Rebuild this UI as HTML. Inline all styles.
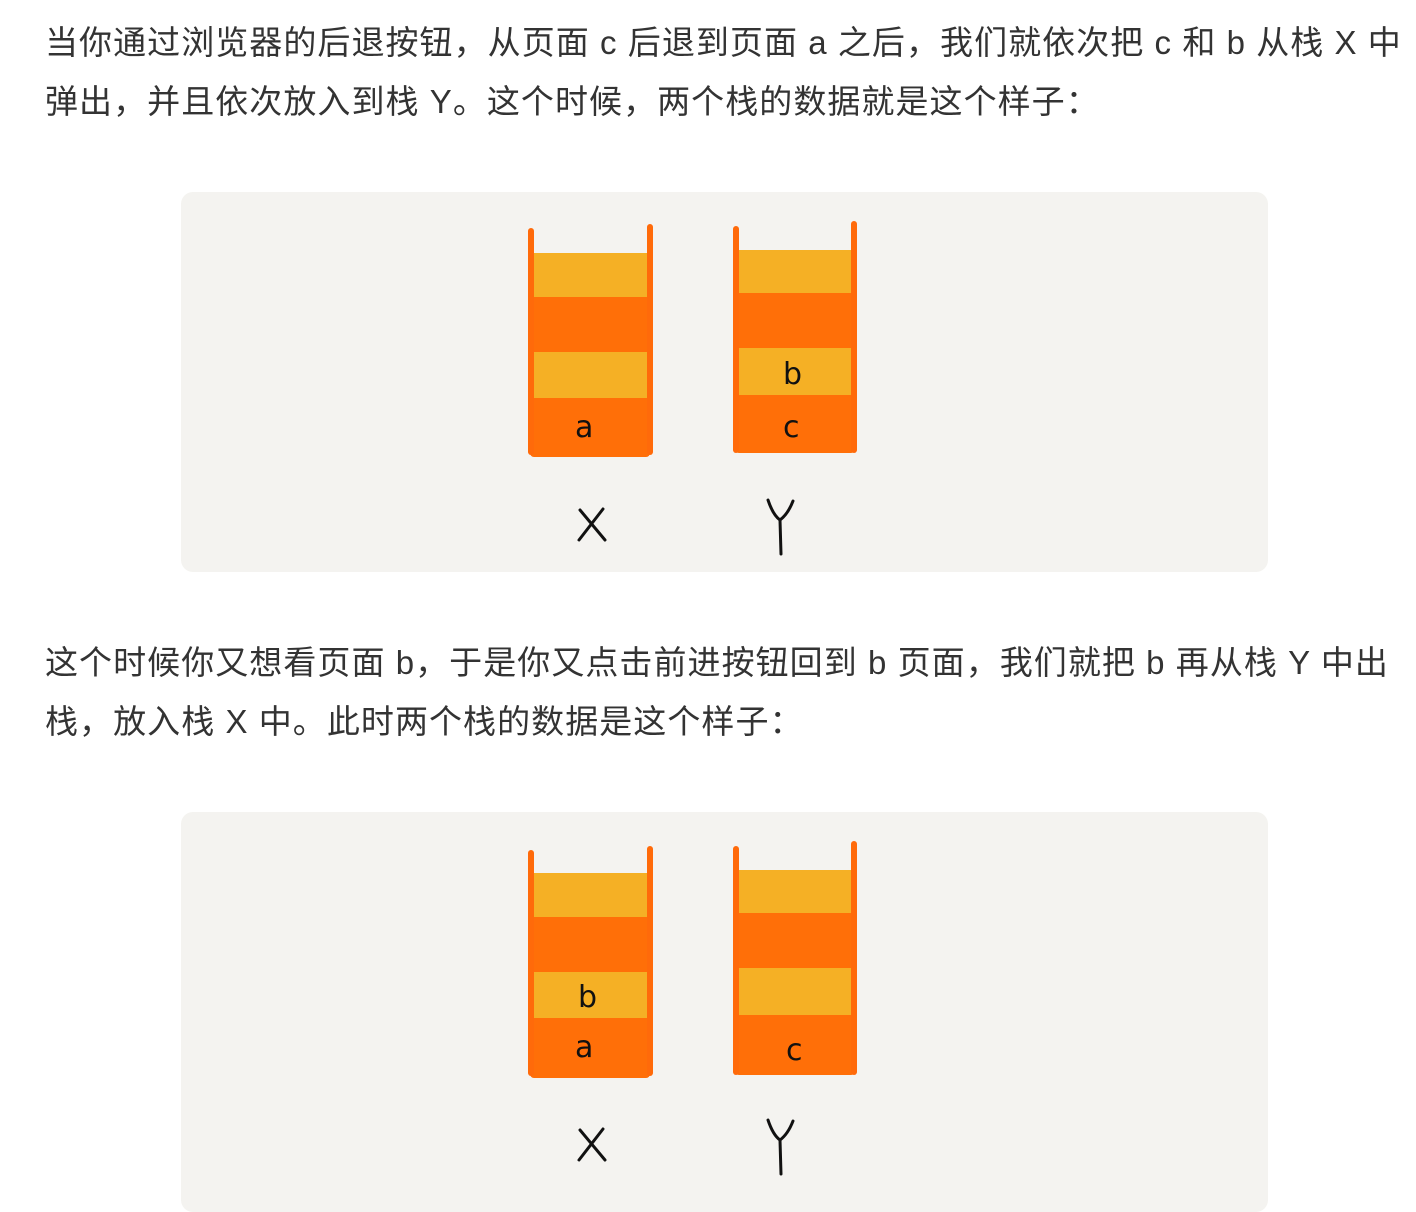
<!DOCTYPE html>
<html><head><meta charset="utf-8"><style>
body{margin:0;width:1416px;height:1190px;background:#fff;position:relative;overflow:hidden;font-family:"Liberation Sans","Noto Sans CJK SC",sans-serif;}
.t{position:absolute;left:45px;font-size:33px;letter-spacing:1.05px;color:#333;white-space:nowrap;line-height:60px;}
.box{position:absolute;left:181px;width:1087px;height:380px;background:#f4f3f0;border-radius:12px;}
.a{position:absolute;}
.y{background:#f5b025;}
.o{background:#ff6f08;}
.w{background:#ff6a0a;border-radius:3px;}
.l{position:absolute;font-family:"DejaVu Sans",sans-serif;color:#111;font-size:30px;}
svg{position:absolute;left:0;top:0;}
</style></head><body>
<div class="t" style="top:13px">当你通过浏览器的后退按钮，从页面 c 后退到页面 a 之后，我们就依次把 c 和 b 从栈 X 中</div>
<div class="t" style="top:72px">弹出，并且依次放入到栈 Y。这个时候，两个栈的数据就是这个样子：</div>
<div class="box" style="top:192px"></div>
<div class="t" style="top:633px">这个时候你又想看页面 b，于是你又点击前进按钮回到 b 页面，我们就把 b 再从栈 Y 中出</div>
<div class="t" style="top:692px">栈，放入栈 X 中。此时两个栈的数据是这个样子：</div>
<div class="box" style="top:812px;height:400px"></div>

<!-- set 1 X -->
<div class="a y" style="left:532px;top:253px;width:116px;height:44px"></div>
<div class="a o" style="left:532px;top:297px;width:116px;height:55px"></div>
<div class="a y" style="left:532px;top:352px;width:116px;height:46px"></div>
<div class="a o" style="left:530px;top:398px;width:120px;height:59px;border-radius:0 0 4px 4px"></div>
<div class="a w" style="left:528px;top:228px;width:6px;height:227px"></div>
<div class="a w" style="left:647px;top:224px;width:6px;height:231px"></div>
<div class="l" style="left:575px;top:410px">a</div>
<!-- set 1 Y -->
<div class="a y" style="left:737px;top:250px;width:116px;height:43px"></div>
<div class="a o" style="left:737px;top:293px;width:116px;height:55px"></div>
<div class="a y" style="left:737px;top:348px;width:116px;height:47px"></div>
<div class="a o" style="left:735px;top:395px;width:120px;height:58px;border-radius:0 0 4px 4px"></div>
<div class="a w" style="left:733px;top:226px;width:6px;height:227px"></div>
<div class="a w" style="left:851px;top:221px;width:6px;height:232px"></div>
<div class="l" style="left:783px;top:357px">b</div>
<div class="l" style="left:783px;top:410px">c</div>

<!-- set 2 X -->
<div class="a y" style="left:532px;top:873px;width:116px;height:44px"></div>
<div class="a o" style="left:532px;top:917px;width:116px;height:55px"></div>
<div class="a y" style="left:532px;top:972px;width:116px;height:46px"></div>
<div class="a o" style="left:530px;top:1018px;width:120px;height:60px;border-radius:0 0 4px 4px"></div>
<div class="a w" style="left:528px;top:850px;width:6px;height:226px"></div>
<div class="a w" style="left:647px;top:846px;width:6px;height:230px"></div>
<div class="l" style="left:578px;top:980px">b</div>
<div class="l" style="left:575px;top:1030px">a</div>
<!-- set 2 Y -->
<div class="a y" style="left:737px;top:870px;width:116px;height:43px"></div>
<div class="a o" style="left:737px;top:913px;width:116px;height:55px"></div>
<div class="a y" style="left:737px;top:968px;width:116px;height:47px"></div>
<div class="a o" style="left:735px;top:1015px;width:120px;height:60px;border-radius:0 0 4px 4px"></div>
<div class="a w" style="left:733px;top:846px;width:6px;height:229px"></div>
<div class="a w" style="left:851px;top:841px;width:6px;height:234px"></div>
<div class="l" style="left:786px;top:1033px">c</div>

<svg width="1416" height="1190" fill="none" stroke="#111" stroke-width="3" stroke-linecap="round">
<path d="M580 510 L605 540 M603 509 L579 540"/>
<path d="M768 500 Q773 515 780 520 Q788 514 793 501 M780 520 L781 554"/>
<path d="M580 1130 L605 1160 M603 1129 L579 1160"/>
<path d="M768 1120 Q773 1135 780 1140 Q788 1134 793 1121 M780 1140 L781 1174"/>
</svg>
</body></html>
